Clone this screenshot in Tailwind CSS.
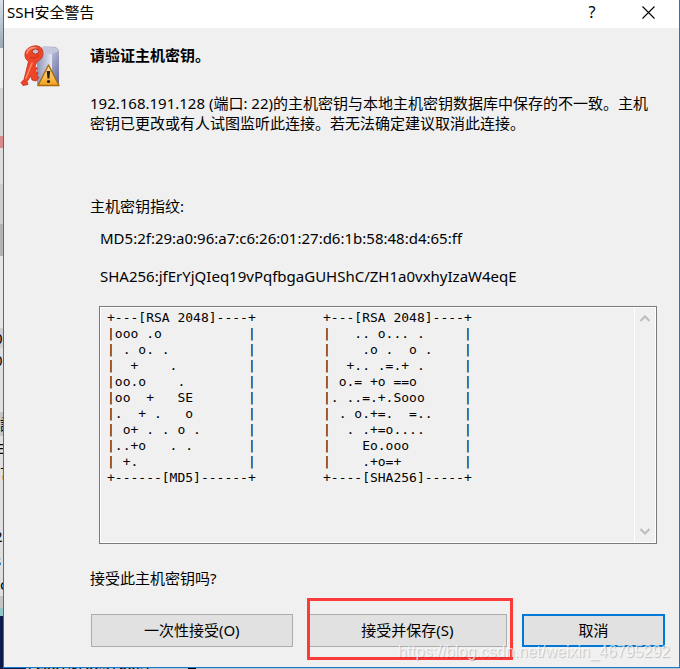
<!DOCTYPE html>
<html lang="zh-CN">
<head>
    <meta charset="UTF-8">
    <meta name="viewport" content="width=device-width, initial-scale=1.0">
    <title>SSH安全警告</title>
    <script src="https://cdn.jsdelivr.net/npm/@tailwindcss/browser@4"></script>
</head>
<body class="relative flex flex-col min-h-screen overflow-hidden bg-[#c9c9c9] text-[15px] leading-5 text-black font-['Noto_Sans','Noto_Sans_CJK_SC',sans-serif]">
    <div class="flex flex-1">
        <!-- Edge of the window behind -->
        <div class="flex flex-col w-[3px] shrink-0 overflow-hidden bg-[#e0e0e0]" aria-hidden="true">
            <div class="h-12 bg-linear-to-b from-[#d9e2ea] to-[#9aa9b8]"></div>
            <div class="h-10 bg-[#ededed]"></div>
            <div class="h-12 bg-[#d5d5d5]"></div>
            <div class="h-3 bg-[#d98a8a]"></div>
            <div class="h-9 bg-[#dedede]"></div>
            <div class="h-10 bg-[#cfcfcf]"></div>
            <div class="h-8 bg-[#b4b4b4]"></div>
            <div class="h-18 bg-[#e6e6e6]"></div>
            <div class="h-5 leading-5 bg-[#d0d0d0]"><span class="-ml-1.5">0</span></div>
            <div class="h-6 leading-6"><span class="-ml-1.5">0</span></div>
            <div class="h-10"></div>
            <div class="h-6 leading-6 bg-[#c6c6c6]">請</div>
            <div class="h-6 leading-6"><span class="-ml-1">E</span></div>
            <div class="h-8 leading-6">言</div>
            <div class="h-8"></div>
            <div class="h-6 leading-6"><span class="-ml-1.5">2</span></div>
            <div class="h-6 leading-6"><span class="-ml-1.5">s</span></div>
            <div class="h-6 leading-6">c</div>
            <div class="h-3 bg-[#c4c4c4]"></div>
            <div class="h-2 bg-[#8fc7c9]"></div>
            <div class="flex-1 bg-[#0d1b4c]"></div>
        </div>

        <!-- Dialog -->
        <main class="flex flex-col flex-1 min-w-0 bg-[#f0f0f0] border border-t-0 border-[#1979ca]">
            <header class="flex items-center h-7 bg-white pl-[3px] pr-6">
                <h1 class="flex-1 text-[15px] pb-1">SSH安全警告</h1>
                <button type="button" aria-label="帮助" class="w-4 mr-[42px] pb-1 text-[16px]">?</button>
                <button type="button" aria-label="关闭" class="pb-1">
                    <svg class="w-[13px] h-[13px]" viewBox="0 0 13 13" fill="none" stroke="#000" stroke-width="1.1"><path d="M.5.5l12 12M12.5.5l-12 12"/></svg>
                </button>
            </header>

            <div class="flex flex-1 pt-[17px]">
                <svg class="w-10 h-[42px] ml-4 mr-[30px] shrink-0" viewBox="0 0 40 42">
                    <defs>
                        <linearGradient id="server" x1="0" x2="1" y1="0" y2="1">
                            <stop offset="0" stop-color="#d5d8e8"/>
                            <stop offset=".5" stop-color="#a9aecb"/>
                            <stop offset="1" stop-color="#5a5f96"/>
                        </linearGradient>
                        <linearGradient id="front" x1="0" x2="1" y1="0" y2="0">
                            <stop offset="0" stop-color="#8f95b8"/>
                            <stop offset="1" stop-color="#e6e8f4"/>
                        </linearGradient>
                        <linearGradient id="warn" x1="0" x2="0" y1="0" y2="1">
                            <stop offset="0" stop-color="#ffe9a0"/>
                            <stop offset="1" stop-color="#f2a01e"/>
                        </linearGradient>
                    </defs>
                    <path d="M17 4l7-3 12 1 3 3v34l-4 2H17z" fill="url(#server)"/>
                    <path d="M17 9h15v30H17z" fill="url(#front)"/>
                    <path d="M17 6l8-4 11 1 3 3-7 3H17z" fill="#c4c7db"/>
                    <!-- key -->
                    <path d="M14 1c5-1 9 2 9 7 0 4-2 7-6 8.500l-2 5 2.500 2-2 2.500 2.500 2-1.500 3 2.500 1.500-3 3.500-4-1-1-4-4 5.500 1 3-5 1-2-3 3-3 4.500-18C6 15 4.500 12 5 8.500 5.500 5 9 1.500 14 1z" fill="#ee4528" stroke="#c02e16" stroke-width=".8"/>
                    <path d="M7 8c1-4 5-6 9-5" fill="none" stroke="#ff8f72" stroke-width="1.8" stroke-linecap="round"/>
                    <path d="M12 18L6 33" fill="none" stroke="#ff8566" stroke-width="1.6" stroke-linecap="round"/>
                    <ellipse cx="15.5" cy="6.5" rx="3.2" ry="2.6" fill="#c9c3cf" stroke="#b32c16"/>
                    <path d="M10 12c3 2 7 1 9-2" fill="none" stroke="#c8321a" stroke-width="1.2"/>
                    <!-- warning sign -->
                    <path d="M28.5 20L39 40.5H18z" fill="url(#warn)" stroke="#a66a12" stroke-width="1.4" stroke-linejoin="round"/>
                    <path d="M26.7 26h3.5l-.8 7.5h-1.9z" fill="#2b2210"/>
                    <circle cx="28.5" cy="36.5" r="1.6" fill="#2b2210"/>
                </svg>

                <div class="flex flex-col flex-1 min-w-0">
                    <h2 class="text-[15px] font-bold mb-7">请验证主机密钥。</h2>
                    <p class="h-[83px] pr-5">192.168.191.128 (端口: 22)的主机密钥与本地主机密钥数据库中保存的不一致。主机密钥已更改或有人试图监听此连接。若无法确定建议取消此连接。</p>

                    <label for="fingerprint" class="mt-5 mb-3">主机密钥指纹:</label>
                    <p class="ml-[10px] mb-[18px]">MD5:2f:29:a0:96:a7:c6:26:01:27:d6:1b:58:48:d4:65:ff</p>
                    <p class="ml-[10px] mb-5">SHA256:jfErYjQIeq19vPqfbgaGUHShC/ZH1a0vxhyIzaW4eqE</p>

                    <div class="flex h-[238px] ml-[9px] mr-[22px] border border-[#7a7a7a]">
                        <textarea id="fingerprint" readonly wrap="off" class="flex-1 min-w-0 resize-none overflow-hidden outline-none border border-white pl-[6px] pt-0.5 text-[13px] leading-4 font-['DejaVu_Sans_Mono',monospace] [tab-size:216px]">
+---[RSA 2048]----+&#9;+---[RSA 2048]----+
|ooo .o           |&#9;|   .. o... .     |
| . o. .          |&#9;|    .o .  o .    |
|  +    .         |&#9;|  +.. .=.+ .     |
|oo.o    .        |&#9;| o.= +o ==o      |
|oo  +   SE       |&#9;|. ..=.+.Sooo     |
|.  + .   o       |&#9;| . o.+=.  =..    |
| o+ . . o .      |&#9;|  . .+=o....     |
|..+o   . .       |&#9;|    Eo.ooo       |
| +.              |&#9;|    .+o=+        |
+------[MD5]------+&#9;+----[SHA256]-----+</textarea>
                        <div class="flex flex-col justify-between items-center w-[21px] py-[7px] border border-l-0 border-white">
                            <svg class="w-[10px] h-[7px]" viewBox="0 0 10 7" fill="none" stroke="#bdbdbd" stroke-width="2"><path d="M.5 6L5 1.500 9.500 6"/></svg>
                            <svg class="w-[10px] h-[7px]" viewBox="0 0 10 7" fill="none" stroke="#bdbdbd" stroke-width="2"><path d="M.5 1L5 5.500 9.500 1"/></svg>
                        </div>
                    </div>

                    <p class="mt-6 mb-[26px]">接受此主机密钥吗?</p>
                    <div class="flex gap-[15px] ml-px mr-[14px] mb-5">
                        <button type="button" class="flex-[201] h-[33px] pb-0.5 bg-[#e1e1e1] border border-[#adadad]">一次性接受(O)</button>
                        <div class="relative flex flex-[201]">
                            <button type="button" class="flex-1 h-[33px] pb-0.5 bg-[#e1e1e1] border border-[#adadad]">接受并保存(S)</button>
                            <span class="absolute -left-px -right-1.5 -top-4 -bottom-[13px] border-3 border-[#fb3a3a] pointer-events-none"></span>
                        </div>
                        <button type="button" class="flex-[140] h-[33px] pb-0.5 bg-[#e1e1e1] border-2 border-[#0078d7]">取消</button>
                    </div>
                </div>
            </div>
        </main>
    </div>
    <!-- Terminal line peeking out underneath -->
    <div class="flex h-0.5 overflow-hidden bg-[#c4c4c4] font-['DejaVu_Sans_Mono',monospace] text-[14px]" aria-hidden="true">
        <div class="w-[26px] bg-[#0d1b4c]"></div>
        <div class="w-[150px] -mt-2">[root@localhost ~]#</div>
        <div class="w-2 ml-3 bg-black"></div>
    </div>

    <span class="absolute right-2.5 bottom-2 text-[16px] text-white/70 font-['Liberation_Sans',sans-serif] [text-shadow:1px_1px_1px_rgb(0_0_0/0.2)]">https://blog.csdn.net/weixin_46795292</span>
</body>
</html>
